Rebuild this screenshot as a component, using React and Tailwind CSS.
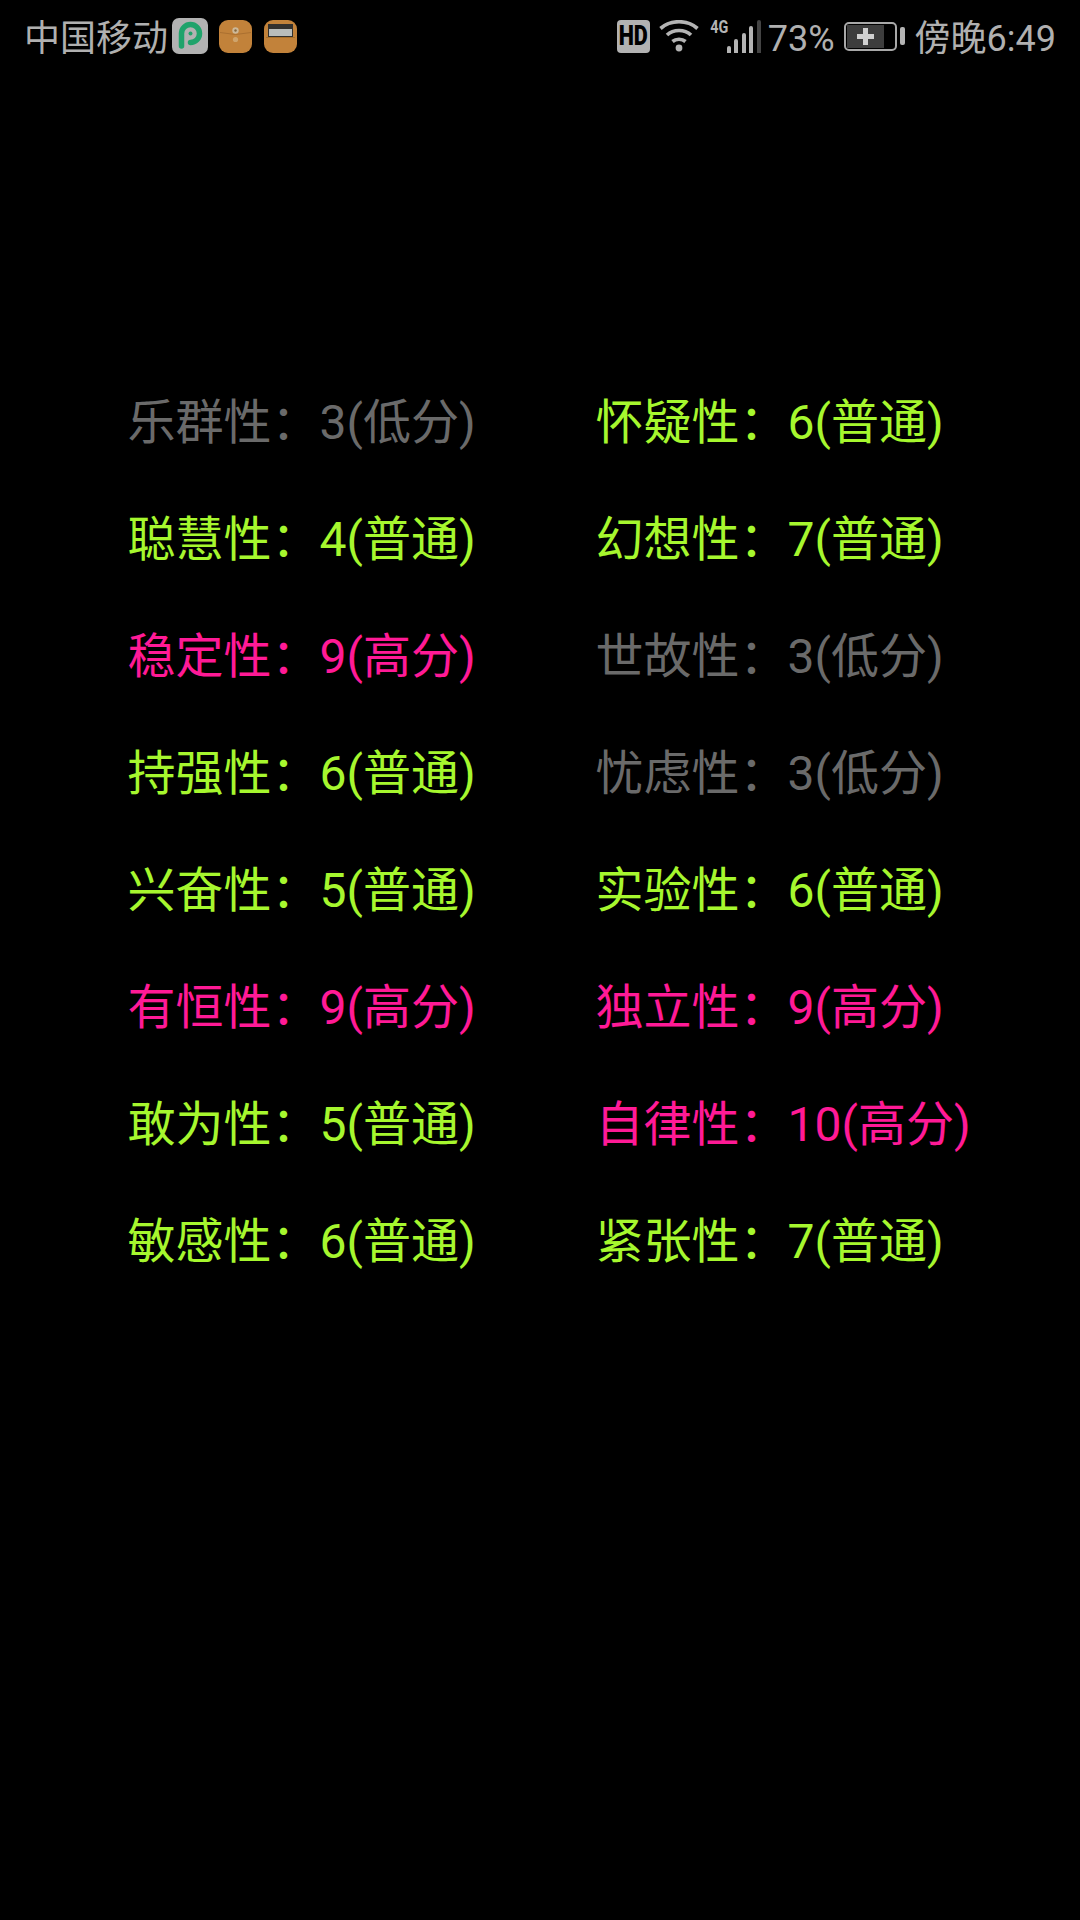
const left = [
  ['乐群性', '3(低分)', 'low'],
  ['聪慧性', '4(普通)', 'mid'],
  ['稳定性', '9(高分)', 'high'],
  ['持强性', '6(普通)', 'mid'],
  ['兴奋性', '5(普通)', 'mid'],
  ['有恒性', '9(高分)', 'high'],
  ['敢为性', '5(普通)', 'mid'],
  ['敏感性', '6(普通)', 'mid'],
]

const right = [
  ['怀疑性', '6(普通)', 'mid'],
  ['幻想性', '7(普通)', 'mid'],
  ['世故性', '3(低分)', 'low'],
  ['忧虑性', '3(低分)', 'low'],
  ['实验性', '6(普通)', 'mid'],
  ['独立性', '9(高分)', 'high'],
  ['自律性', '10(高分)', 'high'],
  ['紧张性', '7(普通)', 'mid'],
]

const colors = {
  low: 'text-[#6a6a6a]',
  mid: 'text-[#a6f72e]',
  high: 'text-[#ff1a96]',
}

function PIcon() {
  return (
    <div className="w-[36px] h-[36px] rounded-[7px] bg-[#b2b2b2]">
      <svg width="36" height="36" viewBox="0 0 36 36" fill="none">
        <path d="M9.5 28V15.5a9 9 0 1 1 9 9" stroke="#1fa36b" strokeWidth="5.5" strokeLinecap="round" />
        <circle cx="18.5" cy="15.5" r="2" fill="#1fa36b" />
      </svg>
    </div>
  )
}

function EnvelopeIcon() {
  return (
    <svg width="33" height="33" viewBox="0 0 33 33">
      <rect width="33" height="33" rx="9" fill="#c2823a" />
      <path d="M1 12.5 16.5 14.5 32 12.5" stroke="#ab7030" strokeWidth="1" fill="none" />
      <circle cx="16.5" cy="10.5" r="3.2" fill="#cdb898" />
      <circle cx="16.5" cy="10.5" r="1.2" fill="#86683e" />
      <circle cx="16.5" cy="19.5" r="2.6" fill="#cfa46c" />
    </svg>
  )
}

function WalletIcon() {
  return (
    <svg width="33" height="33" viewBox="0 0 33 33">
      <rect width="33" height="33" rx="9" fill="#c2823a" />
      <rect x="4" y="4" width="25" height="13" fill="#33312e" />
      <rect x="5" y="9" width="23" height="7" fill="#b9bdbb" />
      <path d="M2 17.5h29" stroke="#a96f28" strokeWidth="1" />
    </svg>
  )
}

function HdIcon() {
  return (
    <div className="w-[33px] h-[33px] rounded-[4px] bg-[#b2b2b2] flex items-center justify-center text-black text-[27px] leading-none font-black font-['Roboto',sans-serif]">
      <span className="scale-x-[0.8]">HD</span>
    </div>
  )
}

function WifiIcon() {
  return (
    <svg width="40" height="32" viewBox="0 0 40 32" fill="none" stroke="#b4b4b4" strokeWidth="3.7">
      <path d="M1.5 8.5C11.5 -.5 28.5 -.5 38.5 8.5" />
      <path d="M8 15C14.5 9 25.5 9 32 15" />
      <path d="M13.5 21.5C17 18.5 23 18.5 26.5 21.5" />
      <circle cx="20" cy="28" r="3.4" fill="#b4b4b4" stroke="none" />
    </svg>
  )
}

function SignalIcon() {
  return (
    <div className="relative w-[52px] h-[34px] flex items-end justify-end gap-[3.5px]">
      <span className="absolute left-[-1px] top-[-1px] w-[18px] text-center text-[#b4b4b4] text-[18px] leading-none font-bold font-['Roboto',sans-serif]">
        <span className="inline-block scale-x-[0.8]">4G</span>
      </span>
      <div className="w-[4px] h-[7px] bg-[#b4b4b4] rounded-t-full" />
      <div className="w-[4px] h-[14px] bg-[#b4b4b4] rounded-t-[2px]" />
      <div className="w-[4px] h-[20px] bg-[#b4b4b4] rounded-t-[2px]" />
      <div className="w-[4px] h-[27px] bg-[#b4b4b4] rounded-t-[2px]" />
      <div className="w-[4px] h-[33px] bg-[#444444] rounded-t-[2px]" />
    </div>
  )
}

function BatteryIcon() {
  return (
    <div className="flex items-center gap-[3px]">
      <div className="w-[53px] h-[29px] rounded-[5px] border-2 border-[#a8a8a8] p-[1px]">
        <div className="w-[37px] h-full bg-[#3d3d3d] flex items-center justify-center">
          <svg width="17" height="17" viewBox="0 0 17 17">
            <path d="M6 0h5v6h6v5h-6v6H6v-6H0V6h6z" fill="#d0d0d0" />
          </svg>
        </div>
      </div>
      <div className="w-[5px] h-[18px] bg-[#b4b4b4] rounded-[2px]" />
    </div>
  )
}

function Row({ item }) {
  const [name, score, level] = item
  return (
    <div className={`h-[117px] flex items-center whitespace-nowrap text-[48px] ${colors[level]}`}>
      {name}：{score}
    </div>
  )
}

export default function App() {
  return (
    <div className="w-[1080px] h-[1920px] bg-black overflow-hidden font-['Roboto','Noto_Sans_CJK_SC',sans-serif]">
      <div className="h-[72px] pl-[24px] pr-[24px] flex items-center justify-between text-[#b0b0b0] text-[36px]">
        <div className="flex items-center">
          <span className="mr-[4px] pt-[5px]">中国移动</span>
          <PIcon />
          <div className="ml-[11px] mr-[12px]"><EnvelopeIcon /></div>
          <WalletIcon />
        </div>
        <div className="flex items-center">
          <HdIcon />
          <div className="ml-[9px] mr-[10px]"><WifiIcon /></div>
          <SignalIcon />
          <span className="ml-[7px] mr-[9px] pt-[5px]">73%</span>
          <BatteryIcon />
          <span className="ml-[10px] pt-[5px]">傍晚6:49</span>
        </div>
      </div>
      <div className="mt-[292px] pl-[127.5px] flex">
        <div className="w-[468px]">
          {left.map((item) => <Row key={item[0]} item={item} />)}
        </div>
        <div>
          {right.map((item) => <Row key={item[0]} item={item} />)}
        </div>
      </div>
    </div>
  )
}
